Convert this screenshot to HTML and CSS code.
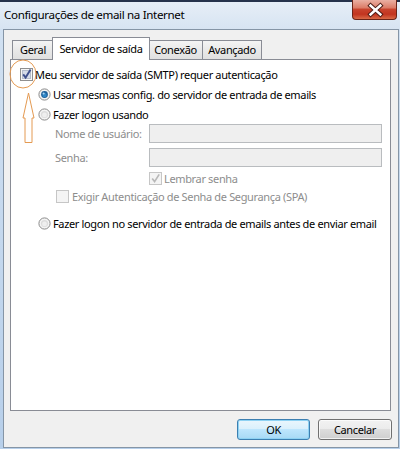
FILE: index.html
```html
<!DOCTYPE html>
<html lang="pt-BR">
<head>
<meta charset="utf-8">
<title>Configurações de email na Internet</title>
<link rel="stylesheet" href="styles.css">
</head>
<body>
<div class="window">
  <div class="header">
    <span class="title">Configurações de email na Internet</span>
    <span class="close">
      <svg width="45" height="20" viewBox="0 0 45 20">
        <path d="M19 5.5 L29 14.5 M29 5.5 L19 14.5" stroke="#4a1c15" stroke-width="4.6" stroke-linecap="square" fill="none"/>
        <path d="M19 5.5 L29 14.5 M29 5.5 L19 14.5" stroke="#ffffff" stroke-width="2.6" stroke-linecap="square" fill="none"/>
      </svg>
    </span>
  </div>
  <div class="client">
    <div class="tabs">
      <div class="tab t-geral">Geral</div>
      <div class="tab active t-serv">Servidor de saída</div>
      <div class="tab t-con">Conexão</div>
      <div class="tab t-av">Avançado</div>
    </div>
    <div class="panel">
      <div class="row r1">
        <svg class="box" width="13" height="13" viewBox="0 0 13 13">
          <rect x="0.5" y="0.5" width="12" height="12" fill="#f6f6f6" stroke="#8f8f8f"/>
          <rect x="2.5" y="2.5" width="8" height="8" fill="#d5dbe8" stroke="#b4bccb"/>
          <path d="M3.2 6.4 L5.6 9.6 L10.6 1.6" stroke="#3e4f8c" stroke-width="1.9" fill="none"/>
        </svg>
        <span class="text">Meu servidor de saída (SMTP) requer autenticação</span>
      </div>
      <div class="row r2">
        <svg class="box" width="13" height="13" viewBox="0 0 13 13">
          <circle cx="6.5" cy="6.5" r="5.6" fill="#f2f2f2" stroke="#8b8b8b"/>
          <circle cx="6.5" cy="6.5" r="3.4" fill="#1d5f9a"/>
          <circle cx="6.5" cy="7.1" r="2.2" fill="#2f86c6"/>
          <circle cx="5.6" cy="5.5" r="1.1" fill="#a8d4f2"/>
        </svg>
        <span class="text">Usar mesmas config. do servidor de entrada de emails</span>
      </div>
      <div class="row r3">
        <svg class="box" width="13" height="13" viewBox="0 0 13 13">
          <circle cx="6.5" cy="6.5" r="5.6" fill="#f4f4f4" stroke="#8b8b8b"/>
          <circle cx="6.5" cy="6.5" r="3.6" fill="#dcdcdc"/>
          <circle cx="6.5" cy="6.9" r="2.4" fill="#efefef"/>
        </svg>
        <span class="text">Fazer logon usando</span>
      </div>
      <div class="field f1">
        <span class="flabel">Nome de usuário:</span>
        <span class="input"></span>
      </div>
      <div class="field f2">
        <span class="flabel">Senha:</span>
        <span class="input"></span>
      </div>
      <div class="row r6">
        <svg class="box" width="13" height="13" viewBox="0 0 13 13">
          <rect x="0.5" y="0.5" width="12" height="12" fill="#f4f4f4" stroke="#c6c6c6"/>
          <path d="M3.2 6.4 L5.6 9.6 L10.2 2.4" stroke="#b8b8b8" stroke-width="1.7" fill="none"/>
        </svg>
        <span class="text dim">Lembrar senha</span>
      </div>
      <div class="row r7">
        <svg class="box" width="13" height="13" viewBox="0 0 13 13">
          <rect x="0.5" y="0.5" width="12" height="12" fill="#f4f4f4" stroke="#c6c6c6"/>
        </svg>
        <span class="text dim">Exigir Autenticação de Senha de Segurança (SPA)</span>
      </div>
      <div class="row r8">
        <svg class="box" width="13" height="13" viewBox="0 0 13 13">
          <circle cx="6.5" cy="6.5" r="5.6" fill="#f4f4f4" stroke="#8b8b8b"/>
          <circle cx="6.5" cy="6.5" r="3.6" fill="#dcdcdc"/>
          <circle cx="6.5" cy="6.9" r="2.4" fill="#efefef"/>
        </svg>
        <span class="text">Fazer logon no servidor de entrada de emails antes de enviar email</span>
      </div>
    </div>
    <div class="buttons">
      <span class="btn default">OK</span>
      <span class="btn">Cancelar</span>
    </div>
  </div>
  <svg class="annot" width="400" height="449" viewBox="0 0 400 449">
    <ellipse cx="23" cy="74" rx="13" ry="14" fill="none" stroke="#e49a52" stroke-width="1"/>
    <polygon points="28.5,93 34,118 32,118 32,142.5 25,142.5 25,118 23,118" fill="none" stroke="#e49a52" stroke-width="1"/>
  </svg>
</div>
</body>
</html>
```
FILE: styles.css
```css
* { box-sizing: border-box; }
html, body { margin: 0; padding: 0; }
body {
  width: 400px;
  height: 449px;
  overflow: hidden;
  font-family: "Noto Sans", "Open Sans", sans-serif;
  font-size: 11px;
  letter-spacing: -0.35px;
  color: #000;
  background: #bcd3ec;
}
.window {
  position: relative;
  width: 400px;
  height: 449px;
  display: flex;
  flex-direction: column;
  background: linear-gradient(#d3e2f2, #b7cfea);
}
.header {
  height: 29px;
  flex: none;
  display: flex;
  align-items: flex-start;
  background: linear-gradient(#26334c 0, #26334c 2px, #e6eef7 2px, #d7e4f2 29px);
}
.title {
  flex: 1;
  padding-left: 4px;
  line-height: 30px;
  font-size: 11.6px;
  white-space: nowrap;
}
.close {
  width: 45px;
  height: 20px;
  margin-right: 3px;
  border: 1px solid #6a2418;
  border-top: none;
  border-radius: 0 0 4px 4px;
  background: linear-gradient(#eab0a3 0%, #dc7d69 40%, #c8432d 50%, #c23520 75%, #d96a47 100%);
  display: flex;
}
.close svg { display: block; margin-left: -1px; }
.client {
  flex: 1;
  margin: 0 1px 1px 3px;
  border: 1px solid #8595a6;
  background: #f0f0f0;
  padding: 7px 7px 0 6px;
  display: flex;
  flex-direction: column;
}
.tabs {
  height: 22px;
  flex: none;
  display: flex;
  align-items: flex-start;
  padding-left: 2px;
}
.tab {
  height: 19px;
  margin-top: 3px;
  border: 1px solid #898c95;
  border-bottom: none;
  background: linear-gradient(#f4f4f4, #e9e9e9 50%, #e0e0e0);
  text-align: center;
  line-height: 18px;
  white-space: nowrap;
}
.tab + .tab { border-left: none; }
.tab.active {
  position: relative;
  z-index: 2;
  height: 23px;
  margin: 0 -2px;
  border-left: 1px solid #898c95;
  background: #fff;
  line-height: 21px;
}
.tab.active + .tab { border-left: 1px solid #898c95; }
.t-geral { width: 42px; }
.t-serv { width: 98px; }
.t-con { width: 55px; }
.t-av { width: 59px; }
.panel {
  height: 352px;
  flex: none;
  border: 1px solid #898c95;
  background: #fff;
  padding-top: 6px;
}
.row {
  height: 16px;
  display: flex;
  align-items: center;
  white-space: nowrap;
}
.box { display: block; flex: none; }
.text { margin-left: 2px; }
.dim { color: #8d8d8d; }
.r1 { padding-left: 9px; }
.r2 { padding-left: 27px; margin-top: 4px; }
.r3 { padding-left: 27px; margin-top: 4px; }
.r6 { padding-left: 138px; margin-top: 3px; }
.r7 { padding-left: 45px; margin-top: 2px; }
.r7 .text { margin-left: 3px; }
.r8 { padding-left: 27px; margin-top: 11px; }
.field {
  height: 19px;
  display: flex;
  align-items: center;
  padding-left: 44px;
}
.f1 { margin-top: 2px; }
.f2 { margin-top: 5px; }
.flabel {
  width: 94px;
  color: #8d8d8d;
  white-space: nowrap;
}
.input {
  width: 233px;
  height: 19px;
  border: 1px solid #b9bcbf;
  background: #efefef;
}
.buttons {
  display: flex;
  justify-content: flex-end;
  gap: 8px;
  margin-top: 8px;
  margin-right: -1px;
}
.btn {
  width: 74px;
  height: 21px;
  border: 1px solid #707070;
  border-radius: 3px;
  background: linear-gradient(#f2f2f2, #ebebeb 50%, #dddddd 50%, #cfcfcf);
  box-shadow: inset 0 0 0 1px rgba(255,255,255,0.7);
  text-align: center;
  line-height: 19px;
}
.btn.default {
  width: 73px;
  border-color: #3c7fb1;
  background: linear-gradient(#eaf6fd, #d9f0fc 50%, #bee6fd 50%, #a7d9f5);
  box-shadow: inset 0 0 0 1px #8ed2f3;
}
.annot {
  position: absolute;
  left: 0;
  top: 0;
  pointer-events: none;
}
```
